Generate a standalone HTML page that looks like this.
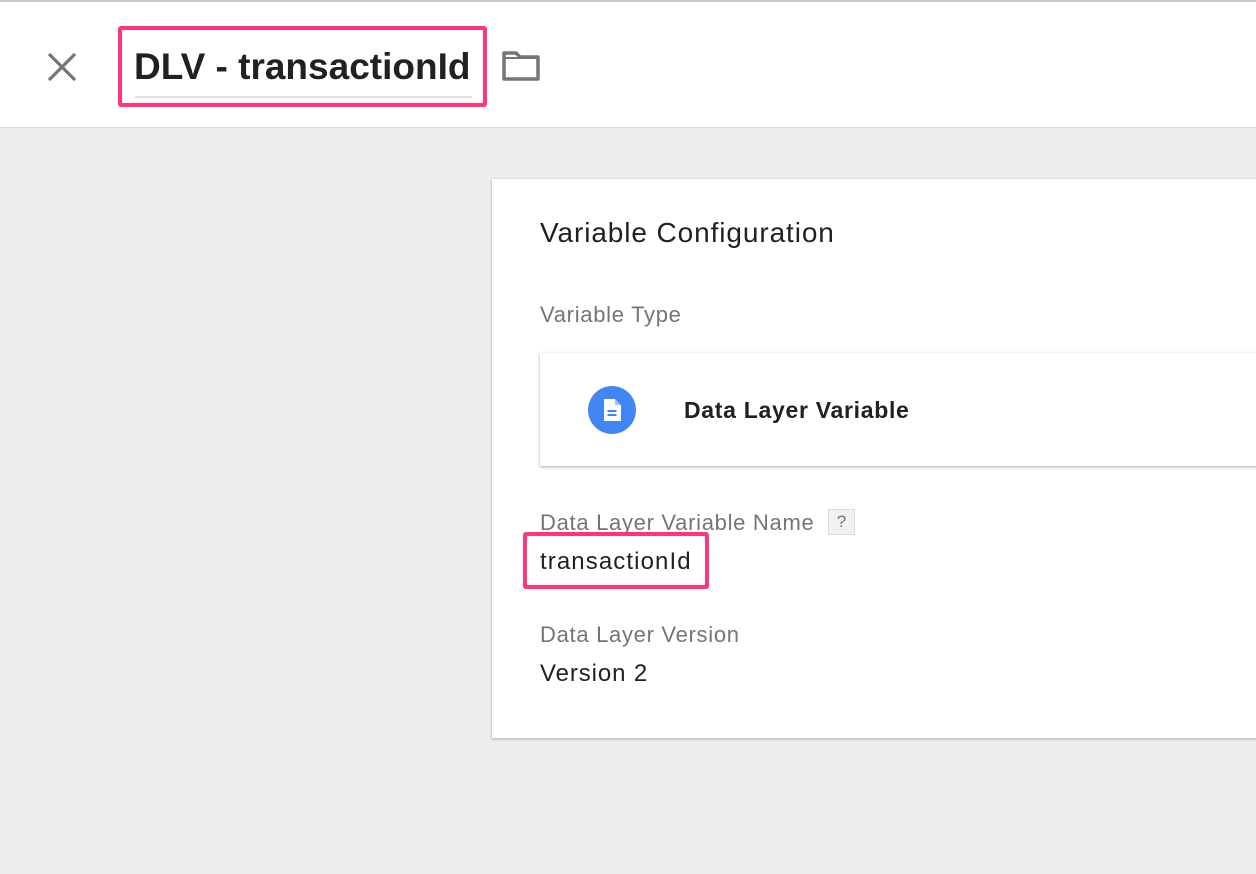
<!DOCTYPE html>
<html><head><style>
body{margin:0;width:1256px;height:874px;background:#eeeeee;font-family:"Liberation Sans",sans-serif;position:relative;overflow:hidden}
.hdr{position:absolute;left:0;top:0;width:1256px;height:128px;background:#fff;border-top:2px solid #c8c8c8;border-bottom:1px solid #dadada;box-sizing:border-box}
.a{position:absolute;white-space:nowrap}
.card{position:absolute;left:492px;top:179px;width:800px;height:559px;background:#fff;box-shadow:0 1px 3px rgba(0,0,0,.3)}
.inner{position:absolute;left:540px;top:353px;width:760px;height:113px;background:#fff;box-shadow:0 1px 3px rgba(0,0,0,.35)}
.pink{position:absolute;border:4px solid #ff3874;border-radius:3px;box-sizing:border-box}
.lbl{color:#757575;font-size:22px;letter-spacing:0.7px}
</style></head><body>
<div class="hdr"></div>
<svg class="a" style="left:46px;top:51px" width="32" height="32" viewBox="0 0 32 32"><path d="M3 3L29 29M29 3L3 29" stroke="#757575" stroke-width="3.2"/></svg>
<div class="pink" style="left:118px;top:26px;width:369px;height:81px"></div>
<div class="a" style="left:135px;top:96px;width:337px;height:2px;background:#e0e0e0"></div>
<div class="a" style="left:134px;top:46px;font-size:37px;font-weight:bold;color:#212121;letter-spacing:0px">DLV - transactionId</div>
<svg class="a" style="left:501px;top:50px" width="40" height="32" viewBox="0 0 40 32"><path d="M3 3h12l4 4h18v22H3z" fill="none" stroke="#757575" stroke-width="3.5" stroke-linejoin="round"/><path d="M3 8h34" stroke="#757575" stroke-width="2"/></svg>
<div class="card"></div>
<div class="a" style="left:540px;top:217px;font-size:28px;color:#212121;letter-spacing:0.9px">Variable Configuration</div>
<div class="a lbl" style="left:540px;top:302px">Variable Type</div>
<div class="inner"></div>
<svg class="a" style="left:588px;top:386px" width="48" height="48" viewBox="0 0 48 48"><circle cx="24" cy="24" r="24" fill="#4285f4"/><path d="M16 13h11l6 6v16h-17z" fill="#fff"/><path d="M27 13v6h6" fill="#4285f4" opacity=".5"/><path d="M19.5 25h9M19.5 29h9" stroke="#4285f4" stroke-width="2"/></svg>
<div class="a" style="left:684px;top:397px;font-size:23px;font-weight:bold;color:#212121;letter-spacing:0.7px">Data Layer Variable</div>
<div class="a lbl" style="left:540px;top:510px">Data Layer Variable Name</div>
<div class="a" style="left:828px;top:509px;width:27px;height:26px;background:#f1f1f1;border:1px solid #dcdcdc;box-sizing:border-box;color:#757575;font-size:17px;text-align:center;line-height:24px">?</div>
<div class="pink" style="left:523px;top:532px;width:186px;height:57px"></div>
<div class="a" style="left:540px;top:548px;font-size:24px;color:#212121;letter-spacing:1.1px">transactionId</div>
<div class="a lbl" style="left:540px;top:622px">Data Layer Version</div>
<div class="a" style="left:540px;top:660px;font-size:24px;color:#212121;letter-spacing:0.9px">Version 2</div>
</body></html>
